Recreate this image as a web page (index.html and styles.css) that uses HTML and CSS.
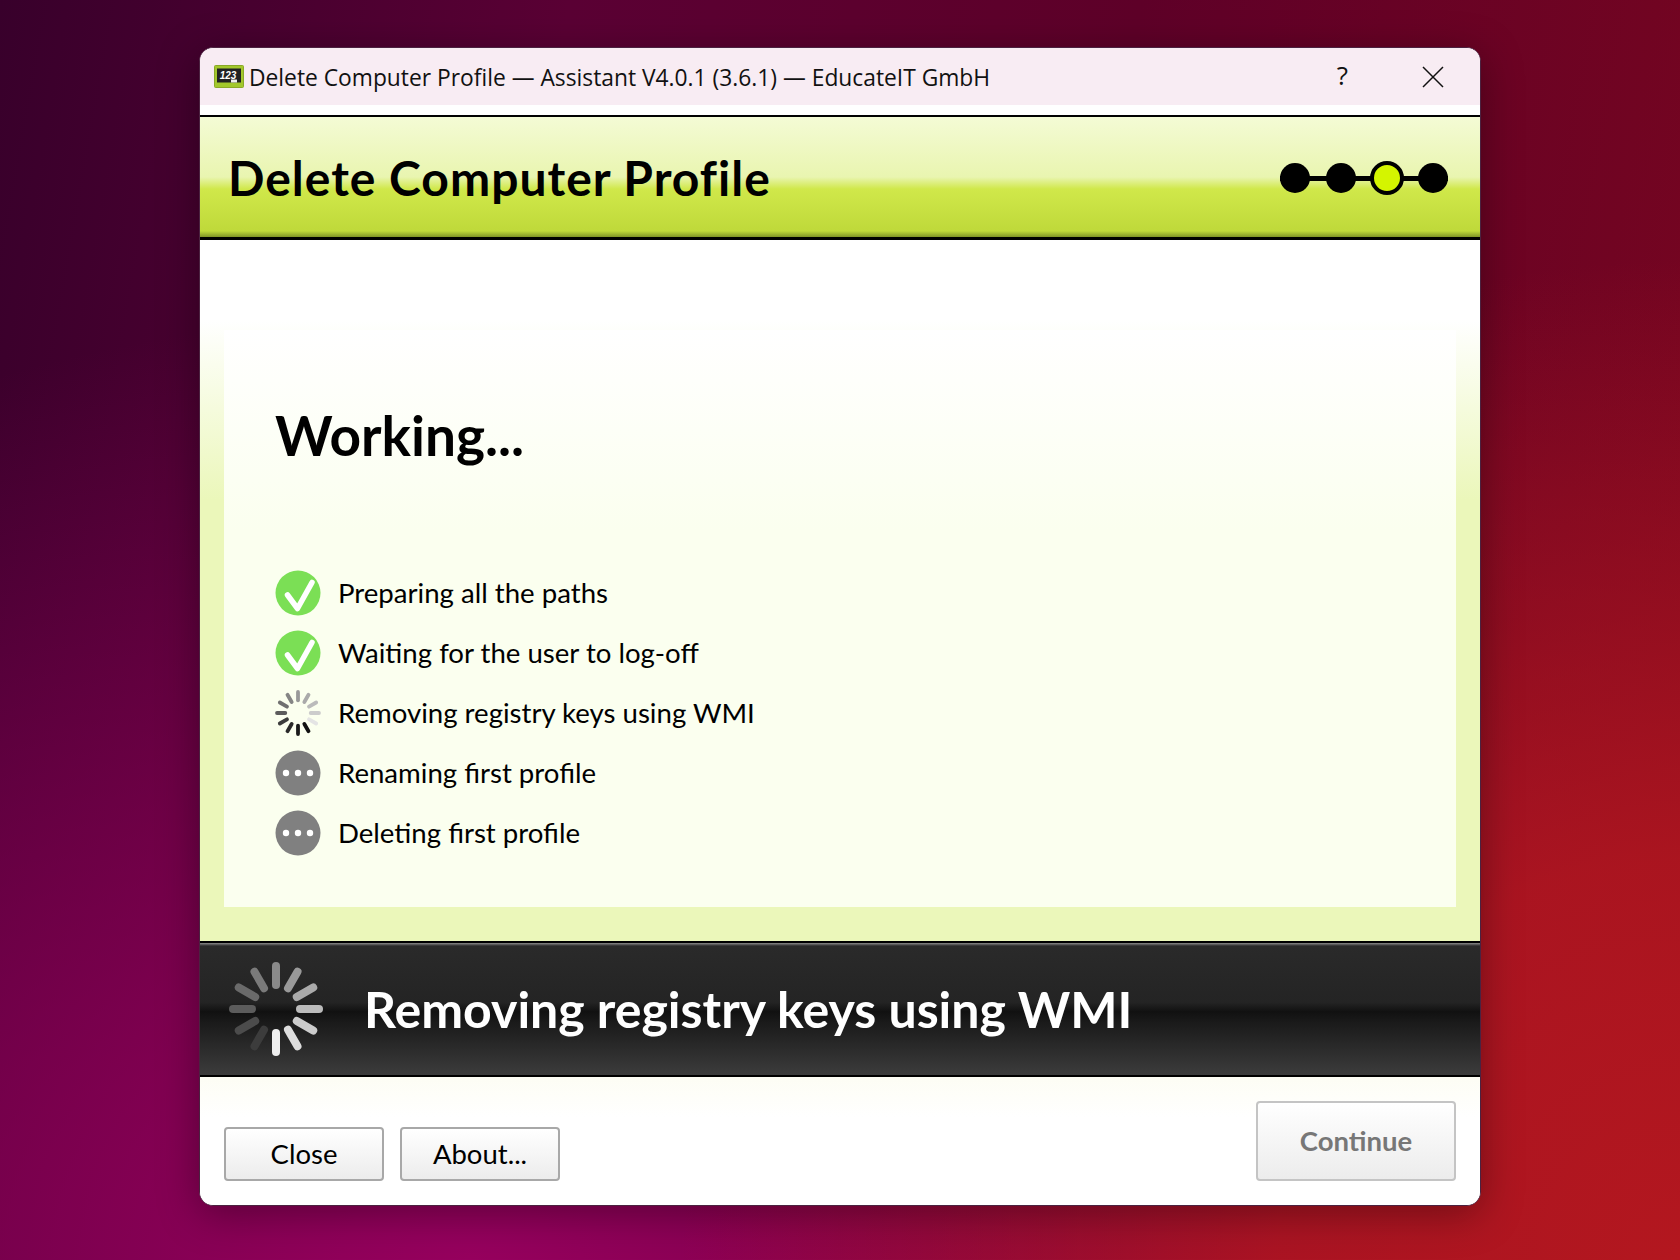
FILE: index.html
```html
<!DOCTYPE html>
<html lang="en">
<head>
    <meta charset="UTF-8">
    <link rel="stylesheet" href="styles.css">
    <title>Delete Computer Profile</title>
</head>
<body>
    <div class="window">
        <div class="titlebar">
            <svg class="app-icon" width="30" height="23" viewBox="0 0 30 23">
                <rect x="0.5" y="0.5" width="29" height="22" rx="1" fill="#a3c82c" stroke="#8aa828"/>
                <rect x="3" y="3.5" width="24" height="14" fill="#222"/>
                <text x="14" y="14" class="app-icon-text">123</text>
                <rect x="17" y="14.5" width="6" height="3" fill="#eee"/>
            </svg>
            <span class="title-text">Delete Computer Profile — Assistant V4.0.1 (3.6.1) — EducateIT GmbH</span>
            <span class="help">?</span>
            <svg class="close" width="22" height="22" viewBox="0 0 22 22">
                <path d="M1 1L21 21M21 1L1 21" stroke="#111" stroke-width="1.5" fill="none"/>
            </svg>
        </div>
        <div class="title-gap"></div>
        <header class="header">
            <h1>Delete Computer Profile</h1>
            <div class="steps">
                <span class="step"></span>
                <span class="step"></span>
                <span class="step current"></span>
                <span class="step"></span>
            </div>
        </header>
        <main class="content">
            <div class="panel">
                <h2>Working...</h2>
                <ul class="tasks">
                    <li>
                        <svg class="task-icon" viewBox="0 0 46 46"><circle cx="23" cy="23" r="22.5" fill="#7bdf55"/><path d="M12.5 25L22.5 38.5L37 12.5" stroke="#fff" stroke-width="5.5" stroke-linecap="round" stroke-linejoin="round" fill="none"/></svg>
                        <span>Preparing all the paths</span>
                    </li>
                    <li>
                        <svg class="task-icon" viewBox="0 0 46 46"><circle cx="23" cy="23" r="22.5" fill="#7bdf55"/><path d="M12.5 25L22.5 38.5L37 12.5" stroke="#fff" stroke-width="5.5" stroke-linecap="round" stroke-linejoin="round" fill="none"/></svg>
                        <span>Waiting for the user to log-off</span>
                    </li>
                    <li>
                        <svg class="task-icon" viewBox="-23 -23 46 46" stroke-width="3.8" stroke-linecap="round">
                            <line y1="-21" y2="-12.7" stroke="#999"/>
                            <line y1="-21" y2="-12.7" stroke="#aaa" transform="rotate(30)"/>
                            <line y1="-21" y2="-12.7" stroke="#bbb" transform="rotate(60)"/>
                            <line y1="-21" y2="-12.7" stroke="#ccc" transform="rotate(90)"/>
                            <line y1="-21" y2="-12.7" stroke="#e4e4e4" transform="rotate(120)"/>
                            <line y1="-21" y2="-12.7" stroke="#111" transform="rotate(150)"/>
                            <line y1="-21" y2="-12.7" stroke="#1a1a1a" transform="rotate(180)"/>
                            <line y1="-21" y2="-12.7" stroke="#2a2a2a" transform="rotate(210)"/>
                            <line y1="-21" y2="-12.7" stroke="#3c3c3c" transform="rotate(240)"/>
                            <line y1="-21" y2="-12.7" stroke="#5c5c5c" transform="rotate(270)"/>
                            <line y1="-21" y2="-12.7" stroke="#707070" transform="rotate(300)"/>
                            <line y1="-21" y2="-12.7" stroke="#858585" transform="rotate(330)"/>
                        </svg>
                        <span>Removing registry keys using WMI</span>
                    </li>
                    <li>
                        <svg class="task-icon" viewBox="0 0 46 46"><circle cx="23" cy="23" r="22.5" fill="#808080"/><circle cx="11" cy="23" r="3.2" fill="#fff"/><circle cx="23" cy="23" r="3.2" fill="#fff"/><circle cx="35" cy="23" r="3.2" fill="#fff"/></svg>
                        <span>Renaming first profile</span>
                    </li>
                    <li>
                        <svg class="task-icon" viewBox="0 0 46 46"><circle cx="23" cy="23" r="22.5" fill="#808080"/><circle cx="11" cy="23" r="3.2" fill="#fff"/><circle cx="23" cy="23" r="3.2" fill="#fff"/><circle cx="35" cy="23" r="3.2" fill="#fff"/></svg>
                        <span>Deleting first profile</span>
                    </li>
                </ul>
            </div>
        </main>
        <section class="status">
            <svg class="big-spinner" viewBox="-48 -48 96 96" stroke-width="8" stroke-linecap="round">
                <line y1="-43" y2="-24" stroke="#8a8a8a"/>
                <line y1="-43" y2="-24" stroke="#999" transform="rotate(30)"/>
                <line y1="-43" y2="-24" stroke="#aaa" transform="rotate(60)"/>
                <line y1="-43" y2="-24" stroke="#bbb" transform="rotate(90)"/>
                <line y1="-43" y2="-24" stroke="#ccc" transform="rotate(120)"/>
                <line y1="-43" y2="-24" stroke="#ddd" transform="rotate(150)"/>
                <line y1="-43" y2="-24" stroke="#eee" transform="rotate(180)"/>
                <line y1="-43" y2="-24" stroke="#3c3c3c" transform="rotate(210)"/>
                <line y1="-43" y2="-24" stroke="#4c4c4c" transform="rotate(240)"/>
                <line y1="-43" y2="-24" stroke="#5c5c5c" transform="rotate(270)"/>
                <line y1="-43" y2="-24" stroke="#6a6a6a" transform="rotate(300)"/>
                <line y1="-43" y2="-24" stroke="#7a7a7a" transform="rotate(330)"/>
            </svg>
            <span class="status-text">Removing registry keys using WMI</span>
        </section>
        <footer class="footer">
            <button class="btn">Close</button>
            <button class="btn">About...</button>
            <button class="btn btn-continue">Continue</button>
        </footer>
    </div>
</body>
</html>
```

FILE: styles.css
```css
* {
    box-sizing: border-box;
}
html, body {
    height: 100%;
}
body {
    margin: 0;
    padding: 47px 0 0 199px;
    overflow: hidden;
    font-family: "Lato", sans-serif;
    background-color: #6d0238;
    background-image:
        radial-gradient(ellipse 1000px 1000px at 100% 100%, #b3171f 0%, rgba(179, 23, 31, 0.85) 40%, rgba(179, 23, 31, 0) 100%),
        radial-gradient(ellipse 1300px 950px at 28% 100%, #96005e 0%, rgba(150, 0, 94, 0) 100%),
        linear-gradient(100deg, #38002b 0%, #5a0034 30%, #5e0028 60%, #7a061f 100%);
}
.window {
    display: flex;
    flex-direction: column;
    width: 1282px;
    height: 1159px;
    background: #fff;
    border: 1px solid #4b2240;
    border-radius: 14px;
    overflow: hidden;
    box-shadow: 0 8px 40px rgba(0, 0, 0, 0.35);
}
.titlebar {
    display: flex;
    align-items: center;
    height: 57px;
    padding: 0 36px 0 14px;
    background: #f8ecf3;
}
.app-icon {
    margin-right: 5px;
}
.app-icon-text {
    font: italic bold 10px "Liberation Sans", sans-serif;
    fill: #fff;
    text-anchor: middle;
}
.title-text {
    flex: 1;
    padding-top: 2px;
    font-family: "Open Sans", sans-serif;
    font-size: 22.8px;
    color: #111;
}
.help {
    margin-right: 74px;
    margin-bottom: 3px;
    font-family: "Open Sans", sans-serif;
    font-size: 26px;
    color: #111;
}
.title-gap {
    height: 10px;
    background: #fff;
}
.header {
    display: flex;
    align-items: center;
    justify-content: space-between;
    height: 125px;
    padding: 2px 32px 0 28px;
    border-top: 2px solid #000;
    border-bottom: 3px solid #000;
    background: linear-gradient(#f4fbd5 0%, #e9f5b0 50%, #d0e84a 60%, #bfd93a 95%, #7f9426 100%);
}
.header h1 {
    margin: -2px 0 0;
    font-size: 48px;
    font-weight: 700;
    letter-spacing: 1px;
    color: #000;
}
.steps {
    display: flex;
    align-items: center;
    gap: 16px;
    background: linear-gradient(#000, #000) center / 100% 5px no-repeat;
}
.step {
    width: 30px;
    height: 30px;
    border-radius: 50%;
    background: #000;
}
.step.current {
    width: 34px;
    height: 34px;
    margin: 0 -2px;
    border: 4px solid #000;
    background: #d4f500;
}
.content {
    flex: 1;
    display: flex;
    flex-direction: column;
    padding: 90px 24px 34px;
    background: linear-gradient(#fff 0, #fff 80px, #ebf7ba 260px);
}
.panel {
    flex: 1;
    padding: 70px 51px 0;
    background: linear-gradient(#fff 0, #fbffef 200px);
}
.panel h2 {
    margin: 0 0 93px;
    font-size: 55px;
    font-weight: 700;
    line-height: 70px;
    color: #000;
}
.tasks {
    margin: 0;
    padding: 0;
    list-style: none;
}
.tasks li {
    display: flex;
    align-items: center;
    gap: 17px;
    height: 60px;
    font-size: 27.6px;
    color: #000;
}
.tasks li span {
    margin-bottom: 2px;
}
.task-icon {
    width: 46px;
    height: 46px;
}
.status {
    display: flex;
    align-items: center;
    gap: 40px;
    height: 136px;
    padding-left: 28px;
    border-top: 2px solid #000;
    border-bottom: 2px solid #000;
    background: linear-gradient(#8a8a8a 0, #2a2a2a 3px, #242424 45%, #111 52%, #1a1a1a 60%, #3c3c3c 100%);
}
.big-spinner {
    width: 96px;
    height: 96px;
}
.status-text {
    font-size: 50px;
    font-weight: 700;
    color: #fff;
}
.footer {
    display: flex;
    align-items: flex-end;
    gap: 16px;
    height: 128px;
    padding: 0 24px 24px;
    background: linear-gradient(#fdfdf4, #fff 40px);
}
.btn {
    width: 160px;
    height: 54px;
    padding-bottom: 3px;
    border: 2px solid #a8a8a8;
    border-radius: 4px;
    background: linear-gradient(#fff, #ececec);
    font-family: "Lato", sans-serif;
    font-size: 27.5px;
    color: #000;
}
.btn-continue {
    width: 200px;
    height: 80px;
    margin-left: auto;
    border-color: #c4c4c4;
    font-weight: 700;
    color: #777;
}
```
